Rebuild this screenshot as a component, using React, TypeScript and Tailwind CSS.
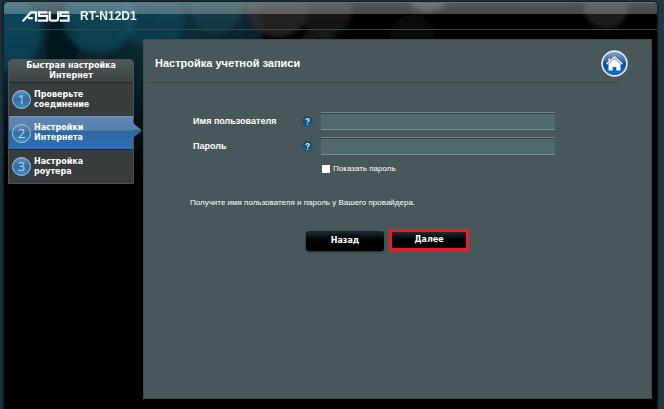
import { ReactNode, useState } from "react";

const steps: { lines: [string, string] }[] = [
  { lines: ["Проверьте", "соединение"] },
  { lines: ["Настройки", "Интернета"] },
  { lines: ["Настройка", "роутера"] },
];

function Bokeh() {
  return (
    <svg className="absolute inset-x-0 top-0 h-[220px] w-full" viewBox="0 0 653 220" preserveAspectRatio="xMinYMin slice" aria-hidden="true">
      <defs>
        <linearGradient id="teal" x1="0" x2="1" y1="0" y2="0">
          <stop offset="0" stopColor="#0a3546" />
          <stop offset="0.25" stopColor="#0a2631" />
          <stop offset="0.7" stopColor="#0d323f" />
          <stop offset="1" stopColor="#0b2631" />
        </linearGradient>
        <linearGradient id="fade" x1="0" x2="0" y1="0" y2="1">
          <stop offset="0" stopColor="#000" stopOpacity="0" />
          <stop offset="0.25" stopColor="#000" stopOpacity="0.15" />
          <stop offset="0.8" stopColor="#000" stopOpacity="1" />
        </linearGradient>
        <filter id="soft" x="-20%" y="-20%" width="140%" height="140%">
          <feGaussianBlur stdDeviation="2.5" />
        </filter>
      </defs>
      <g filter="url(#soft)">
        <rect x="-10" y="-10" width="268" height="230" fill="url(#teal)" />
        <circle cx="-2" cy="30" r="39" fill="#0d5069" opacity="0.8" />
        <ellipse cx="58" cy="44" rx="16" ry="36" fill="#03131b" opacity="0.6" />
        <circle cx="95" cy="14" r="36" fill="#15647c" opacity="0.5" />
        <circle cx="150" cy="16" r="30" fill="#15647c" opacity="0.35" />
        <circle cx="212" cy="4" r="26" fill="#1a5262" opacity="0.45" />
        <circle cx="274" cy="2" r="32" fill="#352f32" opacity="0.75" />
        <circle cx="322" cy="8" r="26" fill="#252323" opacity="0.6" />
        <circle cx="314" cy="50" r="23" fill="#232325" opacity="0.6" />
        <circle cx="408" cy="34" r="22" fill="#171718" opacity="0.6" />
        <circle cx="424" cy="-14" r="23" fill="#6a6a6c" opacity="0.5" />
        <circle cx="602" cy="4" r="22" fill="#343434" opacity="0.6" />
      </g>
      <rect width="653" height="220" fill="url(#fade)" />
    </svg>
  );
}

function AsusLogo() {
  return (
    <svg className="h-[11px] w-[49px]" viewBox="0 0 49 11" fill="none" stroke="#f2f7f9" strokeWidth="2.2" role="img" aria-label="ASUS">
      <path d="M1.5 10.4 10 1.4h5v9M7 7.2h4.8" />
      <path d="M26.5 1.3H18v3.6h8.2v4.7H16.8" />
      <path d="M28.8.3v7.4q0 1.9 1.9 1.9h4.6q1.8 0 1.8-1.9V.3" />
      <path d="M48.2 1.3h-8.8v3.6h8.2v4.7h-8.8" />
    </svg>
  );
}

function HomeIcon() {
  return (
    <svg className="size-[27px]" viewBox="0 0 27 27" aria-hidden="true">
      <defs>
        <linearGradient id="homeBlue" x1="0" x2="0" y1="0" y2="1">
          <stop offset="0" stopColor="#8ba6cb" />
          <stop offset="0.4" stopColor="#3a69ab" />
          <stop offset="0.5" stopColor="#0b4a9c" />
          <stop offset="1" stopColor="#1670d8" />
        </linearGradient>
      </defs>
      <circle cx="13.5" cy="13.5" r="12.4" fill="url(#homeBlue)" stroke="#e5edf4" strokeWidth="1.7" />
      <path d="M7.5 13.8v6.7h4.2v-3.4h3.6v3.4h4.2v-6.7l-6-5.1Z" fill="#f7f9fc" />
      <path d="M5.4 14.2 13.5 7l8.1 7.2M8.2 11.2V8.4" fill="none" stroke="#eef3f9" strokeWidth="1.5" />
    </svg>
  );
}

function HelpIcon() {
  return (
    <svg className="size-[11px]" viewBox="0 0 11 11" aria-hidden="true">
      <defs>
        <linearGradient id="helpBlue" x1="0" x2="0" y1="0" y2="1">
          <stop offset="0" stopColor="#1c3b4e" />
          <stop offset="1" stopColor="#116aa0" />
        </linearGradient>
      </defs>
      <circle cx="5.5" cy="5.5" r="5" fill="url(#helpBlue)" stroke="#2b5368" strokeWidth="0.7" />
      <path d="M3.9 4.1q.1-1.4 1.7-1.4t1.6 1.2q0 .8-.9 1.2-.7.4-.7 1.2M5.6 7.4v1.2" fill="none" stroke="#e6f2f7" strokeWidth="1.2" />
    </svg>
  );
}

function StepBadge({ children }: { children: ReactNode }) {
  return (
    <span className="flex size-[19px] shrink-0 items-center justify-center rounded-full border border-[#a9c4d8] bg-linear-to-b from-[#6290b6] via-[#2f6ea5] to-[#3f8cc8] font-['Open_Sans',sans-serif] text-[13px] leading-[13px] font-normal text-[#b9d3e8]">
      {children}
    </span>
  );
}

function Sidebar() {
  return (
    <nav className="mt-5 ml-1 w-[126px] shrink-0 self-start rounded-t-[4px] border border-[#4c5254] bg-[#373d3f] font-['DejaVu_Sans',Verdana,sans-serif] text-[8px] leading-[10px] font-bold text-white">
      <h2 className="rounded-t-[3px] bg-linear-to-b from-[#50575a] to-[#3d4446] py-px text-center">
        Быстрая настройка
        <br />
        Интернет
      </h2>
      <ol>
        {steps.map((step, i) => {
          const active = i === 1;
          return (
            <li
              key={i}
              className={
                active
                  ? "relative flex h-[33px] items-center gap-[3px] border-t border-[#6d96c2] bg-[linear-gradient(#6088b3_0%,#567fac_42%,#2e68a3_43%,#2f6fb0_100%)] pl-[3px]"
                  : "flex h-[34px] items-center gap-[3px] border-t border-[#232829] pl-[3px]"
              }
            >
              <StepBadge>{i + 1}</StepBadge>
              <a href="#step">
                {step.lines[0]}
                <br />
                {step.lines[1]}
              </a>
              {active && (
                <svg className="absolute top-[6px] -right-[9px] h-[15px] w-[9px]" viewBox="0 0 9 15" aria-hidden="true">
                  <path d="M0 0 9 7.5H0Z" fill="#5881ae" />
                  <path d="M0 7.5h9L0 15Z" fill="#2f69a4" />
                </svg>
              )}
            </li>
          );
        })}
      </ol>
    </nav>
  );
}

const fieldClass =
  "h-[18px] w-full border-t border-b border-t-[#73868b] border-b-[#7b8e93] bg-[#51686e] px-1 text-[10px] text-white shadow-[inset_0_1px_0_#35454a] outline-none";

const labelClass = "self-center text-[9px] leading-[12px] font-bold";

export default function App() {
  const [shown, setShown] = useState(false);
  return (
    <div className="flex min-h-screen bg-linear-to-r from-[#1b303a] to-[#1d3744] pt-[2px] pr-[7px] pl-1 font-['Liberation_Sans',Arial,sans-serif]">
      <div className="relative flex flex-1 flex-col overflow-hidden rounded-t-[4px] border-t border-[#5f7479] bg-black shadow-[0_0_3px_#000]">
        <Bokeh />
        <header className="relative flex h-[27px] items-center gap-[10px] border-b border-[#33474e] bg-[linear-gradient(rgba(205,220,222,0.40)_0,rgba(180,190,190,0.38)_11px,transparent_11px)] pl-[17px]">
          <AsusLogo />
          <h1 className="text-[12px] leading-[14px] font-bold text-[#eef5f7]">RT-N12D1</h1>
        </header>
        <div className="relative flex flex-1 pt-[9px] pr-[5px] pb-[10px]">
          <div className="flex w-[139px] shrink-0">
            <Sidebar />
          </div>
          <main className="flex-1 border border-[#3e4c4e] bg-[#48575a] text-white">
            <div className="mr-[31px] ml-[3px] flex h-[43px] items-end border-b border-[#3b494b] pl-2">
              <h2 className="mb-3 flex-1 text-[11px] leading-[13px] font-bold">Настройка учетной записи</h2>
              <a href="#home" aria-label="Главная" className="-mr-2 mb-[5px]">
                <HomeIcon />
              </a>
            </div>
            <form className="pl-[46px]" onSubmit={(e) => e.preventDefault()}>
              <div className="mt-[29px] mr-24 ml-[3px] grid grid-cols-[109px_19px_1fr] gap-y-[7px]">
                <label htmlFor="user" className={labelClass}>
                  Имя пользователя
                </label>
                <span className="self-center">
                  <HelpIcon />
                </span>
                <input id="user" type="text" className={fieldClass} />
                <label htmlFor="pass" className={labelClass}>
                  Пароль
                </label>
                <span className="self-center">
                  <HelpIcon />
                </span>
                <input id="pass" type={shown ? "text" : "password"} className={fieldClass} />
                <label className="col-start-3 mt-px flex items-center gap-[3px] pl-px text-[8px] leading-[11px]">
                  <input
                    type="checkbox"
                    checked={shown}
                    onChange={(e) => setShown(e.target.checked)}
                    className="size-2 appearance-none bg-white checked:bg-[#2f6fb0]"
                  />
                  Показать пароль
                </label>
              </div>
              <p className="mt-[23px] text-[8px] leading-[11px]">
                Получите имя пользователя и пароль у Вашего провайдера.
              </p>
              <div className="mt-[21px] ml-[116px] flex items-end gap-[5px] font-['DejaVu_Sans',Verdana,sans-serif] text-[8px] leading-[10px] font-bold">
                <button type="button" className="h-5 w-[78px] rounded-[3px] bg-linear-to-b from-[#1f2d33] to-black to-70% shadow-[0_1px_2px_#222c2e]">
                  Назад
                </button>
                <button type="submit" className="h-[22px] w-20 border-3 border-[#ed1c24] bg-linear-to-b from-[#1f2d33] to-black to-70%">
                  Далее
                </button>
              </div>
            </form>
          </main>
        </div>
      </div>
    </div>
  );
}
